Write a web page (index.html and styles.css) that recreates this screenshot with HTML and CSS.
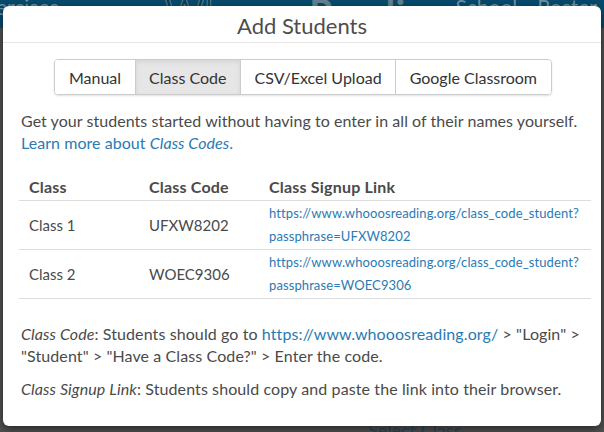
FILE: index.html
```html
<!DOCTYPE html>
<html>
<head>
<meta charset="utf-8">
<link rel="stylesheet" href="styles.css">
</head>
<body>
<div class="page">
  <header class="topbar">
    <span class="nav-left">ercises</span>
    <span class="logo">Whooos<b>Reading</b></span>
    <nav class="nav-right"><span>School</span><span>Roster</span></nav>
  </header>
  <main class="page-body">
    <span class="select-class">Select Class</span>
  </main>
</div>

<div class="modal">
  <div class="modal-header">
    <h1 class="modal-title">Add Students</h1>
  </div>
  <div class="modal-body">
    <div class="tabs">
      <button class="tab">Manual</button>
      <button class="tab active">Class Code</button>
      <button class="tab">CSV/Excel Upload</button>
      <button class="tab">Google Classroom</button>
    </div>
    <p class="intro">Get your students started without having to enter in all of their names yourself. <a class="link" href="#">Learn more about <i>Class Codes</i>.</a></p>
    <table class="codes">
      <thead>
        <tr><th class="c1">Class</th><th class="c2">Class Code</th><th>Class Signup Link</th></tr>
      </thead>
      <tbody>
        <tr><td>Class 1</td><td>UFXW8202</td><td class="url"><a class="link" href="#">https://www.whooosreading.org/class_code_student?<br>passphrase=UFXW8202</a></td></tr>
        <tr><td>Class 2</td><td>WOEC9306</td><td class="url"><a class="link" href="#">https://www.whooosreading.org/class_code_student?<br>passphrase=WOEC9306</a></td></tr>
      </tbody>
    </table>
    <p class="note"><i>Class Code</i>: Students should go to <a class="link" href="#">https://www.whooosreading.org/</a> &gt; "Login" &gt; "Student" &gt; "Have a Class Code?" &gt; Enter the code.</p>
    <p class="note second"><i>Class Signup Link</i>: Students should copy and paste the link into their browser.</p>
  </div>
</div>
</body>
</html>
```
FILE: styles.css
```css
* { box-sizing: border-box; }
html, body { margin: 0; padding: 0; }
body {
  width: 604px;
  height: 432px;
  overflow: hidden;
  font-family: Lato, "Open Sans", sans-serif;
  background: #505050;
  position: relative;
}
.page { height: 432px; display: flex; flex-direction: column; overflow: hidden; }
.topbar {
  height: 28px;
  flex: none;
  background: #074a6c;
  color: #6f90a3;
  display: grid;
  grid-template-columns: 1fr auto 1fr;
  align-items: start;
  font-size: 21px;
  line-height: 14px;
  padding: 0 7px 0 0;
  overflow: hidden;
}
.nav-left { margin-left: -4px; }
.logo {
  font-size: 38px;
  line-height: 24px;
  color: #0c3d58;
  letter-spacing: 0.5px;
  -webkit-text-stroke: 1px #5f7e90;
  margin-left: 16px;
}
.logo b { color: #64808f; -webkit-text-stroke: 0; }
.nav-right { display: flex; gap: 20px; justify-content: flex-end; }
.page-body { flex: 1; position: relative; }
.select-class { position: absolute; left: 368px; bottom: -9px; color: #26455a; font-size: 18px; }

.modal {
  position: absolute;
  left: 3px;
  top: 6px;
  width: 598px;
  height: 420px;
  background: #fff;
  border-radius: 6px;
  box-shadow: 0 3px 9px rgba(0,0,0,0.5);
  color: #4a4a4a;
}
.modal-header {
  height: 37px;
  border-bottom: 1px solid #e5e5e5;
  display: flex;
  justify-content: center;
  align-items: center;
}
.modal-title {
  margin: 0;
  font-weight: 400;
  font-size: 22px;
  color: #4d4d4d;
  line-height: 26px;
  padding-top: 4px;
}
.modal-body { padding: 16px 13px 0 15px; }
.tabs {
  display: flex;
  justify-content: center;
  width: max-content;
  margin: 0 auto;
  border: 1px solid #ccc;
  border-radius: 4px;
  box-shadow: 0 1px 2px rgba(0,0,0,0.12);
  overflow: hidden;
}
.tab {
  font-family: inherit;
  font-size: 16px;
  color: #333;
  background: #fff;
  border: 0;
  border-left: 1px solid #ccc;
  height: 34px;
  padding: 0 13.5px;
  margin: 0;
}
.tab:first-child { border-left: 0; }
.tab.active { background: #e6e6e6; box-shadow: inset 0 2px 4px rgba(0,0,0,0.08); }
.intro {
  margin: 15px 0 0 0;
  font-size: 16px;
  letter-spacing: 0.05px;
  line-height: 22px;
  padding-left: 3px;
}
.link { color: #2a7ab4; text-decoration: none; }
.codes {
  width: 572px;
  margin: 18px 0 0 1px;
  border-collapse: collapse;
  font-size: 15px;
}
.codes th {
  text-align: left;
  font-weight: 700;
  font-size: 16px;
  letter-spacing: 0.2px;
  padding: 6px 10px 4px 10px;
  line-height: 18px;
  border-bottom: 1px solid #ddd;
  color: #4a4a4a;
}
.codes th.c1, .codes th.c2 { width: 120px; }
.codes td {
  padding: 1px 10px;
  border-bottom: 1px solid #ddd;
  vertical-align: middle;
  line-height: 24px;
}
.codes td.url { font-size: 13px; letter-spacing: 0.1px; line-height: 23px; }
.note {
  margin: 24px 0 0 0;
  font-size: 16px;
  letter-spacing: 0.1px;
  line-height: 22px;
  padding-left: 3px;
}
.note.second { margin-top: 11px; }
```
